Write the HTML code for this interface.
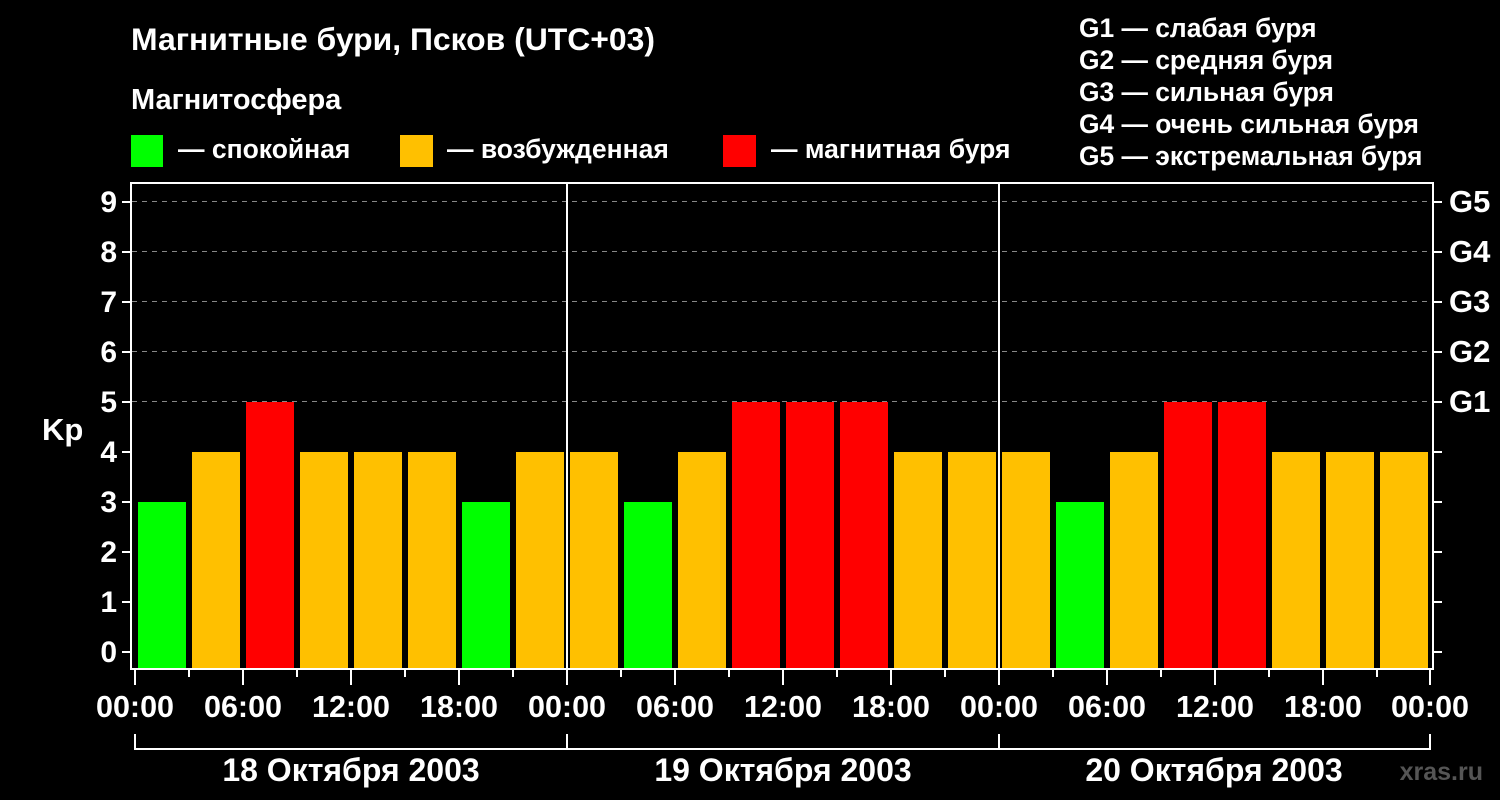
<!DOCTYPE html>
<html><head><meta charset="utf-8"><style>
html,body{margin:0;padding:0;background:#000;}
svg{display:block;}
text{font-family:"Liberation Sans",sans-serif;font-weight:bold;fill:#fff;}
</style></head><body>
<svg width="1500" height="800" xmlns="http://www.w3.org/2000/svg">
<rect width="1500" height="800" fill="#000"/>
<text x="131" y="50" font-size="31.9">Магнитные бури, Псков (UTC+03)</text>
<text x="131" y="109" font-size="29">Магнитосфера</text>
<rect x="131" y="135" width="32" height="32" fill="#00ff00"/>
<text x="178" y="158" font-size="26.5">— спокойная</text>
<rect x="400" y="135" width="33" height="32" fill="#ffc000"/>
<text x="447" y="158" font-size="26.5">— возбужденная</text>
<rect x="723" y="135" width="33" height="32" fill="#ff0000"/>
<text x="771" y="158" font-size="26.5">— магнитная буря</text>
<g font-size="26.4">
<text x="1079" y="37">G1 — слабая буря</text>
<text x="1079" y="69">G2 — средняя буря</text>
<text x="1079" y="101">G3 — сильная буря</text>
<text x="1079" y="133">G4 — очень сильная буря</text>
<text x="1079" y="165">G5 — экстремальная буря</text>
</g>
<g stroke="#888" stroke-width="1" stroke-dasharray="5,5">
<line x1="132" y1="201.5" x2="1433" y2="201.5"/>
<line x1="132" y1="251.5" x2="1433" y2="251.5"/>
<line x1="132" y1="301.5" x2="1433" y2="301.5"/>
<line x1="132" y1="351.5" x2="1433" y2="351.5"/>
<line x1="132" y1="401.5" x2="1433" y2="401.5"/>
</g>
<g>
<rect x="138" y="502" width="48" height="166" fill="#00ff00"/>
<rect x="192" y="452" width="48" height="216" fill="#ffc000"/>
<rect x="246" y="402" width="48" height="266" fill="#ff0000"/>
<rect x="300" y="452" width="48" height="216" fill="#ffc000"/>
<rect x="354" y="452" width="48" height="216" fill="#ffc000"/>
<rect x="408" y="452" width="48" height="216" fill="#ffc000"/>
<rect x="462" y="502" width="48" height="166" fill="#00ff00"/>
<rect x="516" y="452" width="48" height="216" fill="#ffc000"/>
<rect x="570" y="452" width="48" height="216" fill="#ffc000"/>
<rect x="624" y="502" width="48" height="166" fill="#00ff00"/>
<rect x="678" y="452" width="48" height="216" fill="#ffc000"/>
<rect x="732" y="402" width="48" height="266" fill="#ff0000"/>
<rect x="786" y="402" width="48" height="266" fill="#ff0000"/>
<rect x="840" y="402" width="48" height="266" fill="#ff0000"/>
<rect x="894" y="452" width="48" height="216" fill="#ffc000"/>
<rect x="948" y="452" width="48" height="216" fill="#ffc000"/>
<rect x="1002" y="452" width="48" height="216" fill="#ffc000"/>
<rect x="1056" y="502" width="48" height="166" fill="#00ff00"/>
<rect x="1110" y="452" width="48" height="216" fill="#ffc000"/>
<rect x="1164" y="402" width="48" height="266" fill="#ff0000"/>
<rect x="1218" y="402" width="48" height="266" fill="#ff0000"/>
<rect x="1272" y="452" width="48" height="216" fill="#ffc000"/>
<rect x="1326" y="452" width="48" height="216" fill="#ffc000"/>
<rect x="1380" y="452" width="48" height="216" fill="#ffc000"/>
</g>
<g stroke="#fff" stroke-width="2" fill="none">
<rect x="131" y="183" width="1302" height="486"/>
<line x1="567" y1="183" x2="567" y2="669"/>
<line x1="999" y1="183" x2="999" y2="669"/>
<path d="M135 734V749H1430V734M567 734V749M999 734V749"/>
<path d="M122 202H131M122 252H131M122 302H131M122 352H131M122 402H131M122 452H131M122 502H131M122 552H131M122 602H131M122 652H131"/>
<path d="M1433 202H1442M1433 252H1442M1433 302H1442M1433 352H1442M1433 402H1442M1433 452H1442M1433 502H1442M1433 552H1442M1433 602H1442M1433 652H1442"/>
<path d="M135 669V685M189 669V677M243 669V685M297 669V677M351 669V685M405 669V677M459 669V685M513 669V677M567 669V685M621 669V677M675 669V685M729 669V677M783 669V685M837 669V677M891 669V685M945 669V677M999 669V685M1053 669V677M1107 669V685M1161 669V677M1215 669V685M1269 669V677M1323 669V685M1377 669V677M1430 669V685"/>
</g>
<g font-size="30" text-anchor="end">
<text x="117" y="212">9</text><text x="117" y="262">8</text><text x="117" y="312">7</text>
<text x="117" y="362">6</text><text x="117" y="412">5</text><text x="117" y="462">4</text>
<text x="117" y="512">3</text><text x="117" y="562">2</text><text x="117" y="612">1</text>
<text x="117" y="662">0</text>
</g>
<text x="42" y="440" font-size="31">Kp</text>
<g font-size="31">
<text x="1449" y="212">G5</text><text x="1449" y="262">G4</text><text x="1449" y="312">G3</text>
<text x="1449" y="362">G2</text><text x="1449" y="412">G1</text>
</g>
<g font-size="30.5" text-anchor="middle">
<text x="135" y="717">00:00</text><text x="243" y="717">06:00</text><text x="351" y="717">12:00</text><text x="459" y="717">18:00</text>
<text x="567" y="717">00:00</text><text x="675" y="717">06:00</text><text x="783" y="717">12:00</text><text x="891" y="717">18:00</text>
<text x="999" y="717">00:00</text><text x="1107" y="717">06:00</text><text x="1215" y="717">12:00</text><text x="1323" y="717">18:00</text>
<text x="1430" y="717">00:00</text>
</g>
<g font-size="32" text-anchor="middle">
<text x="351" y="781">18 Октября 2003</text>
<text x="783" y="781">19 Октября 2003</text>
<text x="1214" y="781">20 Октября 2003</text>
</g>
<text x="1483" y="780" font-size="25" text-anchor="end" style="fill:#555">xras.ru</text>
</svg>
</body></html>
